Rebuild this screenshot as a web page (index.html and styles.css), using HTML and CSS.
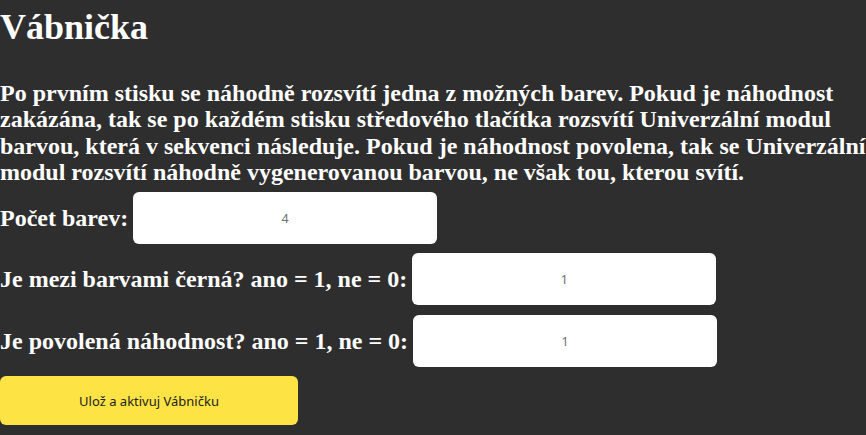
FILE: index.html
```html
<!DOCTYPE html>
<html lang="cs">
<head>
<meta charset="utf-8">
<link rel="stylesheet" href="styles.css">
</head>
<body>
<main class="page">
  <h1 class="title">Vábnička</h1>
  <p class="desc">Po prvním stisku se náhodně rozsvítí jedna z možných barev. Pokud je náhodnost zakázána, tak se po každém stisku středového tlačítka rozsvítí Univerzální modul barvou, která v sekvenci následuje. Pokud je náhodnost povolena, tak se Univerzální modul rozsvítí náhodně vygenerovanou barvou, ne však tou, kterou svítí.</p>
  <div class="row row-first">
    <label class="label" for="n">Počet barev:</label>
    <input class="field" id="n" type="text" value="4">
  </div>
  <div class="row">
    <label class="label" for="b">Je mezi barvami černá? ano = 1, ne = 0:</label>
    <input class="field" id="b" type="text" value="1">
  </div>
  <div class="row row-third">
    <label class="label" for="r">Je povolená náhodnost? ano = 1, ne = 0:</label>
    <input class="field" id="r" type="text" value="1">
  </div>
  <button class="save" type="button">Ulož a aktivuj Vábničku</button>
</main>
</body>
</html>
```
FILE: styles.css
```css
html, body {
  margin: 0;
  padding: 0;
  background: #2e2e2e;
  overflow: hidden;
}
.page {
  font-family: "Liberation Serif", "Times New Roman", serif;
  color: #ffffff;
  display: flex;
  flex-direction: column;
  align-items: flex-start;
  width: 870px;
}
.title {
  font-size: 36px;
  font-weight: bold;
  margin: 7px 0 0 0;
  line-height: 40px;
}
.desc {
  font-size: 24px;
  font-weight: bold;
  line-height: 26.3px;
  margin: 33px 0 0 0;
}
.row {
  display: flex;
  align-items: center;
  gap: 5px;
  margin-top: 9px;
}
.row-first { margin-top: 7px; }
.row-third { margin-top: 10px; }
.label {
  font-size: 24px;
  font-weight: bold;
}
.field {
  box-sizing: border-box;
  width: 304px;
  height: 52px;
  border: none;
  border-radius: 6px;
  background: #ffffff;
  text-align: center;
  font-family: "Noto Sans", "Open Sans", sans-serif;
  font-size: 12.5px;
  color: #707070;
  outline: none;
}
.save {
  margin-top: 9px;
  width: 298px;
  height: 49px;
  border: none;
  border-radius: 6px;
  background: #fde444;
  color: #222222;
  font-family: "Noto Sans", "Open Sans", sans-serif;
  font-size: 13px;
}
```
